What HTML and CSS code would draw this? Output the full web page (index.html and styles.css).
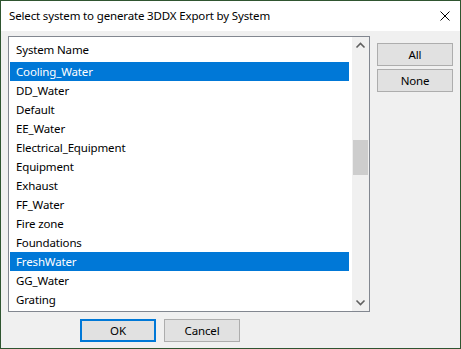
FILE: index.html
```html
<!DOCTYPE html>
<html lang="en">
<head>
    <meta charset="UTF-8">
    <title>Select system to generate 3DDX Export by System</title>
    <link rel="stylesheet" href="styles.css">
</head>
<body>
    <div class="window">
        <div class="titlebar">
            <span class="title">Select system to generate 3DDX Export by System</span>
            <svg class="close" width="10" height="10" viewBox="0 0 10 10">
                <path d="M0.5 0.5 L9.5 9.5 M9.5 0.5 L0.5 9.5" stroke="#000" stroke-width="1" fill="none"/>
            </svg>
        </div>
        <div class="content">
            <div class="main">
                <div class="listbox">
                    <div class="list">
                        <div class="header">System Name</div>
                        <div class="row selected">Cooling_Water</div>
                        <div class="row">DD_Water</div>
                        <div class="row">Default</div>
                        <div class="row">EE_Water</div>
                        <div class="row">Electrical_Equipment</div>
                        <div class="row">Equipment</div>
                        <div class="row">Exhaust</div>
                        <div class="row">FF_Water</div>
                        <div class="row">Fire zone</div>
                        <div class="row">Foundations</div>
                        <div class="row selected">FreshWater</div>
                        <div class="row">GG_Water</div>
                        <div class="row">Grating</div>
                    </div>
                    <div class="scrollbar">
                        <svg class="arrow" width="17" height="17" viewBox="0 0 17 17">
                            <path d="M4.5 10.5 L8.5 6.5 L12.5 10.5" stroke="#606060" stroke-width="1.6" fill="none"/>
                        </svg>
                        <div class="track">
                            <div class="thumb"></div>
                        </div>
                        <svg class="arrow" width="17" height="17" viewBox="0 0 17 17">
                            <path d="M4.5 6.5 L8.5 10.5 L12.5 6.5" stroke="#606060" stroke-width="1.6" fill="none"/>
                        </svg>
                    </div>
                </div>
                <div class="side-buttons">
                    <button class="btn">All</button>
                    <button class="btn">None</button>
                </div>
            </div>
            <div class="footer">
                <button class="btn default">OK</button>
                <button class="btn">Cancel</button>
            </div>
        </div>
    </div>
</body>
</html>
```
FILE: styles.css
```css
body {
    margin: 0;
    padding: 0;
    font-family: "Noto Sans", "Liberation Sans", sans-serif;
    font-size: 11.5px;
    letter-spacing: -0.15px;
    color: #000;
    background-color: #f0f0f0;
}

.window {
    width: 461px;
    height: 349px;
    box-sizing: border-box;
    border: 1px solid #2f5530;
    display: flex;
    flex-direction: column;
    background-color: #f0f0f0;
}

.titlebar {
    height: 30px;
    background-color: #fff;
    display: flex;
    align-items: center;
    justify-content: space-between;
    padding: 0 10px 0 8px;
}

.title {
    margin-top: -1px;
}

.close {
    display: block;
    margin-top: -1px;
}

.content {
    flex: 1;
    padding: 5px 7px 0 7px;
    display: flex;
    flex-direction: column;
}

.main {
    display: flex;
    gap: 7px;
}

.listbox {
    width: 362px;
    height: 276px;
    box-sizing: border-box;
    border: 1px solid #828790;
    background-color: #fff;
    display: flex;
    overflow: hidden;
}

.list {
    flex: 1;
    padding-right: 3px;
    overflow: hidden;
}

.header {
    height: 25px;
    line-height: 25px;
    padding-left: 7px;
}

.row {
    height: 19px;
    line-height: 19px;
    margin-left: 1px;
    padding-left: 6px;
    white-space: nowrap;
}

.row.selected {
    background-color: #0078d7;
    color: #fff;
}

.scrollbar {
    width: 17px;
    background-color: #f0f0f0;
    display: flex;
    flex-direction: column;
}

.arrow {
    display: block;
    flex: none;
}

.track {
    flex: 1;
    position: relative;
}

.thumb {
    position: absolute;
    left: 1px;
    right: 1px;
    top: 86px;
    height: 35px;
    background-color: #cdcdcd;
}

.side-buttons {
    display: flex;
    flex-direction: column;
    gap: 3px;
    padding-top: 7px;
}

.btn {
    width: 76px;
    height: 23px;
    box-sizing: border-box;
    border: 1px solid #adadad;
    background-color: #e1e1e1;
    font-family: "Noto Sans", "Liberation Sans", sans-serif;
    font-size: 11.5px;
    letter-spacing: -0.15px;
    color: #000;
    padding: 0;
    margin: 0;
    line-height: 20px;
}

.btn.default {
    border: 2px solid #0078d7;
}

.footer {
    display: flex;
    gap: 8px;
    padding: 7px 0 0 72px;
}
```
